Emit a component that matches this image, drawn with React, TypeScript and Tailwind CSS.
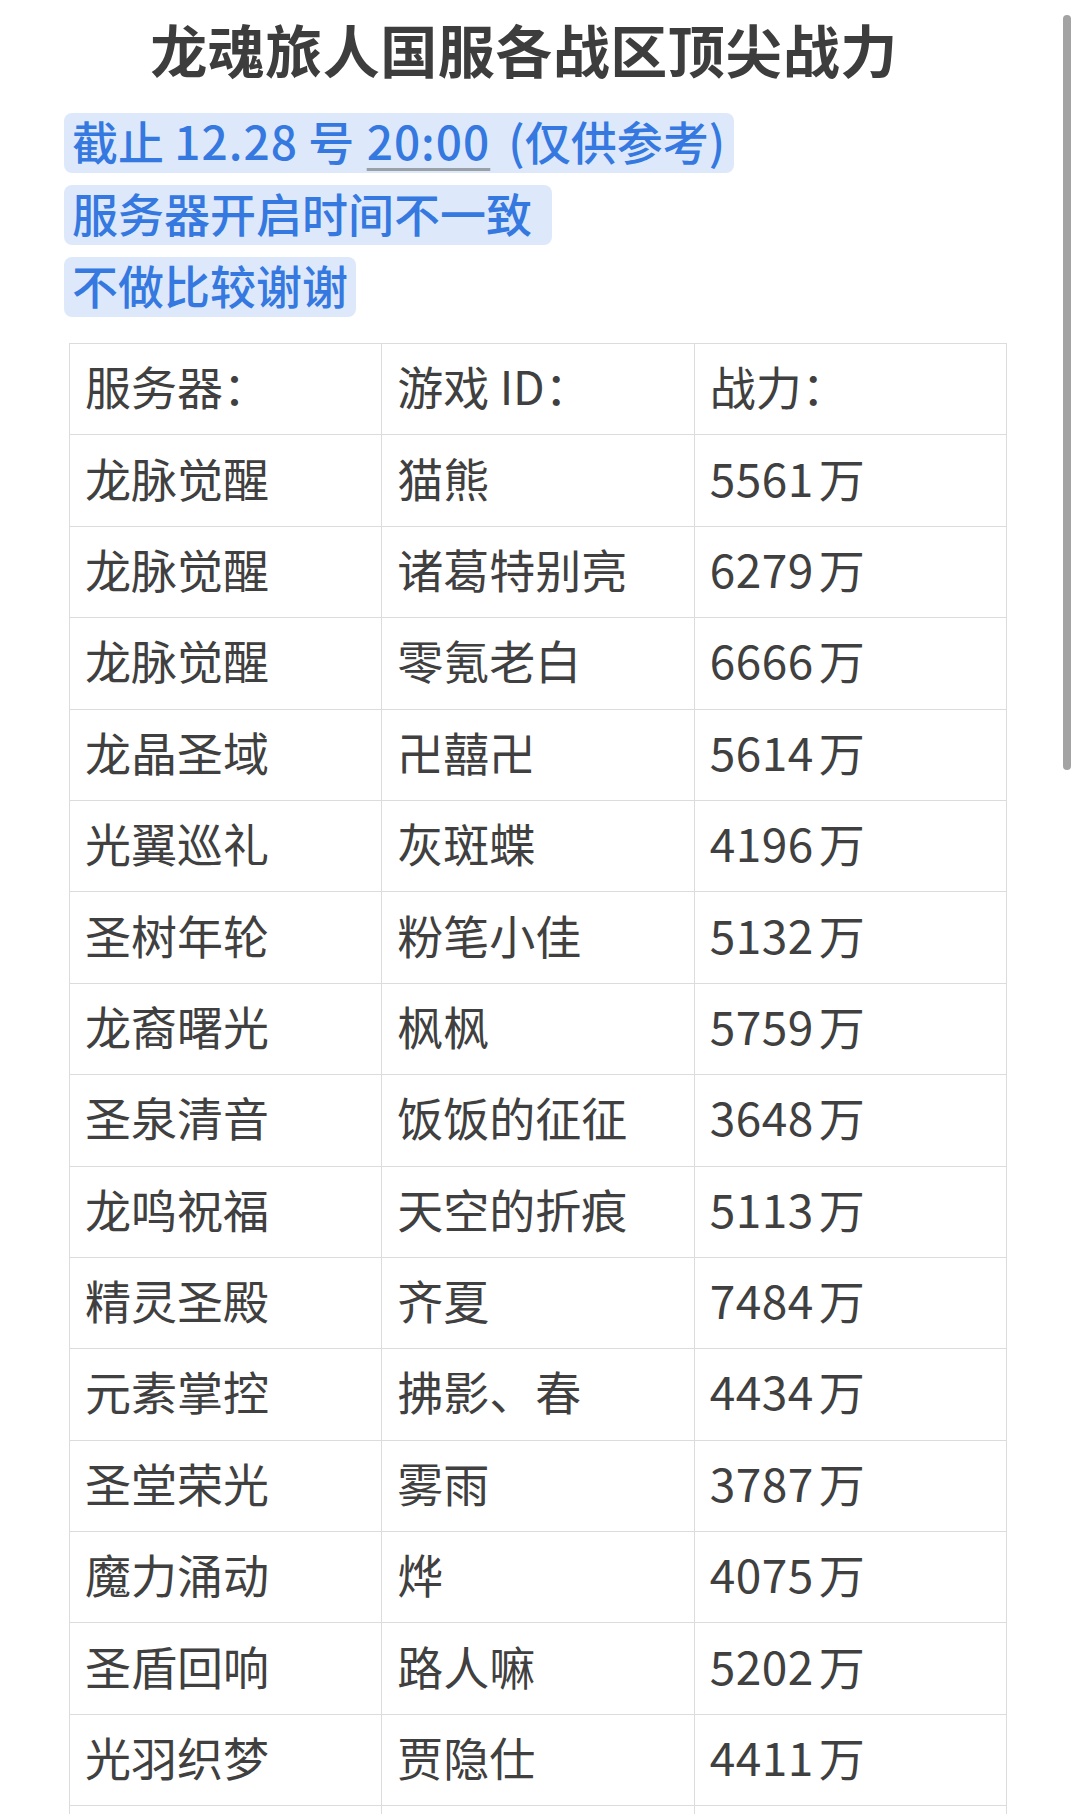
const rows: [string, string, string][] = [
  ["龙脉觉醒", "猫熊", "5561"],
  ["龙脉觉醒", "诸葛特别亮", "6279"],
  ["龙脉觉醒", "零氪老白", "6666"],
  ["龙晶圣域", "卍囍卍", "5614"],
  ["光翼巡礼", "灰斑蝶", "4196"],
  ["圣树年轮", "粉笔小佳", "5132"],
  ["龙裔曙光", "枫枫", "5759"],
  ["圣泉清音", "饭饭的征征", "3648"],
  ["龙鸣祝福", "天空的折痕", "5113"],
  ["精灵圣殿", "齐夏", "7484"],
  ["元素掌控", "拂影、春", "4434"],
  ["圣堂荣光", "雾雨", "3787"],
  ["魔力涌动", "烨", "4075"],
  ["圣盾回响", "路人嘛", "5202"],
  ["光羽织梦", "贾隐仕", "4411"],
  ["", "", ""],
];

function Cell({ children }: { children: React.ReactNode }) {
  return (
    <div className="flex h-[91.4px] items-center border-r border-b border-[#dcdcdc] px-[15px] pb-[7px] text-[46px] text-[#404040]">
      {children}
    </div>
  );
}

export default function App() {
  return (
    <div
      className="relative min-h-[1814px] w-full overflow-hidden bg-white"
      style={{ fontFamily: '"Noto Sans CJK SC", "Noto Sans", sans-serif' }}
    >
      <div className="absolute right-[9px] top-[15px] h-[755px] w-[8px] rounded-full bg-[#a3a3a3]" />

      <div className="flex justify-center pr-[32px] pt-[8px]">
        <h1 className="text-[57px] font-bold leading-[80px] tracking-[0.5px] text-[#3d3d3d]">
          龙魂旅人国服各战区顶尖战力
        </h1>
      </div>

      <div className="mt-[25px] flex flex-col items-start gap-3 pl-[64px] text-[46px] font-medium text-[#3478e0]">
        <span className="inline-block rounded-lg bg-[#dde9fb] pb-[5px] pl-2 pr-[9px] leading-[55px]">
          截止 <span className="tracking-[1px]">12.28</span> 号{" "}
          <span className="ml-[2px] tracking-[1px] underline decoration-[#9aa0a8] decoration-[3px] underline-offset-[8px]">
            20:00
          </span>
          <span className="ml-[18px]">(仅供参考)</span>
        </span>
        <span className="inline-block rounded-lg bg-[#dde9fb] pb-[5px] pl-2 pr-5 leading-[55px]">
          服务器开启时间不一致
        </span>
        <span className="inline-block rounded-lg bg-[#dde9fb] pb-[5px] pl-2 pr-2 leading-[55px]">
          不做比较谢谢
        </span>
      </div>

      <div className="ml-[69px] mt-[26px] grid w-[938px] grid-cols-3 border-t border-l border-[#dcdcdc]">
        <Cell>服务器：</Cell>
        <Cell>游戏 ID：</Cell>
        <Cell>战力：</Cell>
        {rows.map((r, i) => (
          <div key={i} className="contents">
            <Cell>{r[0]}</Cell>
            <Cell>{r[1]}</Cell>
            <Cell>
              {r[2] && (
                <>
                  <span className="tracking-[0.5px]">{r[2]}</span>
                  <span className="ml-[5px]">万</span>
                </>
              )}
            </Cell>
          </div>
        ))}
      </div>
    </div>
  );
}
